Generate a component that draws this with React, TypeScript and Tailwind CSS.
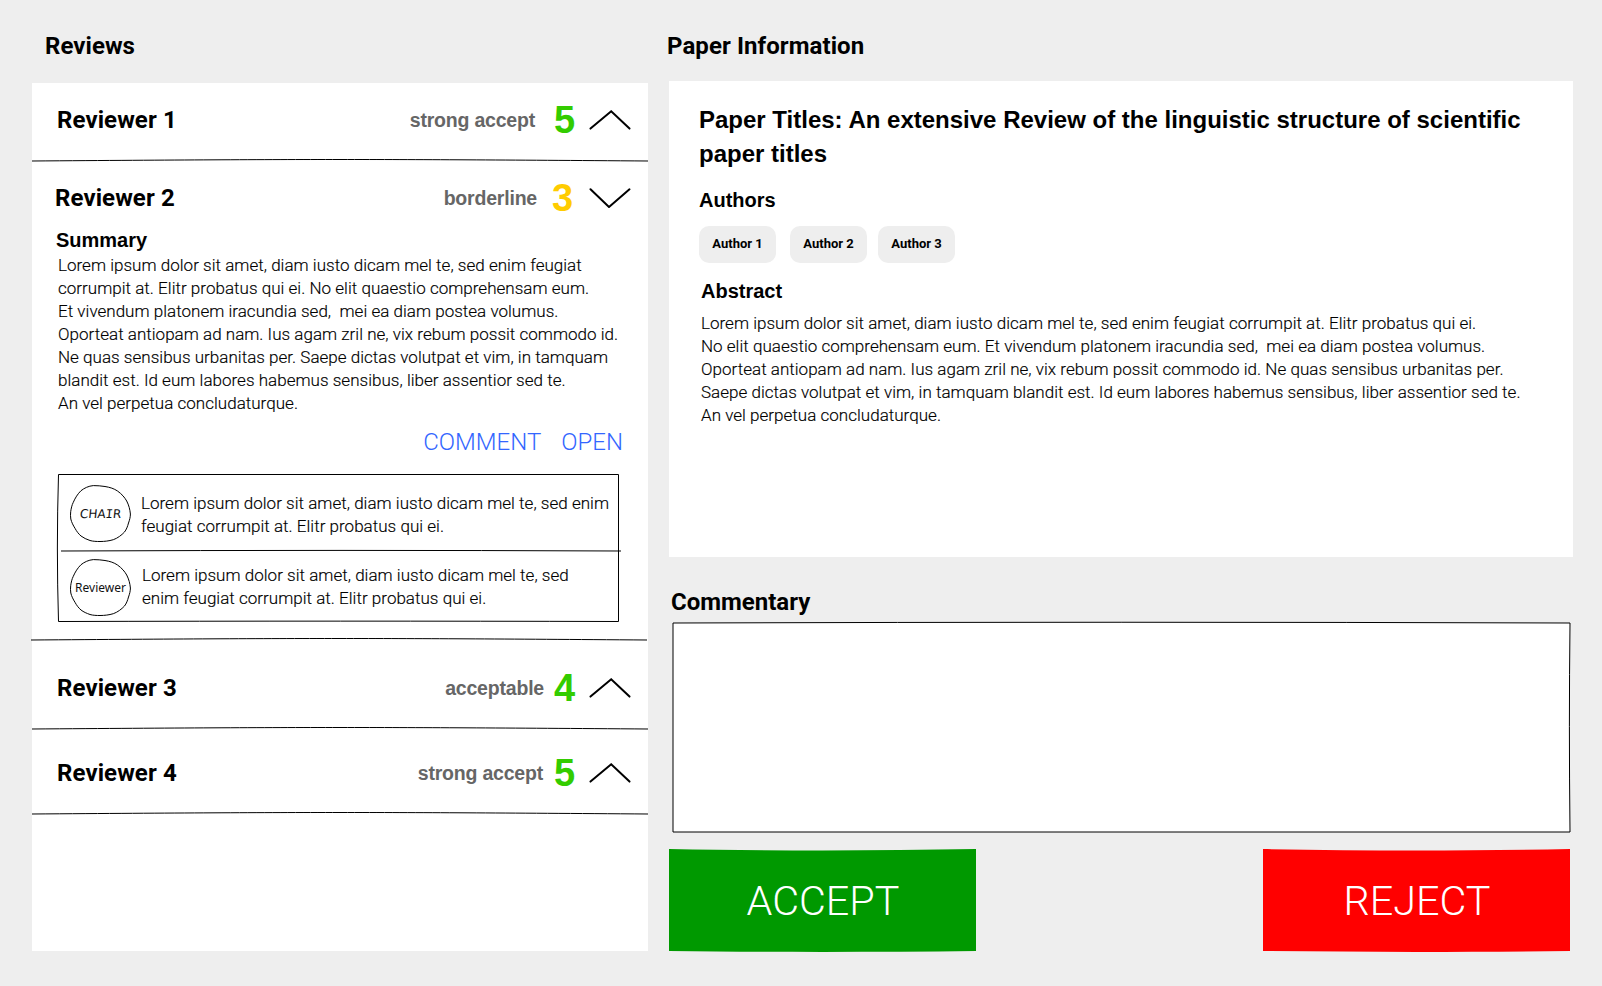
import type { ReactNode } from "react";

function Divider({ className = "" }: { className?: string }) {
  return (
    <svg className={`block h-[3px] w-[616px] shrink-0 ${className}`} viewBox="0 0 616 3" fill="none" stroke="#000">
      <path d="M0 2C150 .9 230 .5 308 .5S466 .9 616 2" />
    </svg>
  );
}

function Chevron({ open }: { open?: boolean }) {
  return (
    <svg className="block h-5 w-[42px] shrink-0" viewBox="0 0 42 20" fill="none" stroke="#000" strokeWidth="2" strokeLinecap="round">
      <path d={open ? "M1.5 1.3L20 19L40.5 1.3" : "M1.5 18.6L22.2 1.3L40.5 18.6"} />
    </svg>
  );
}

type HeaderProps = {
  name: string;
  verdict: string;
  score: number;
  className: string;
  verdictClass: string;
  scoreClass: string;
  open?: boolean;
};

function ReviewerHeader({ name, verdict, score, className, verdictClass, scoreClass, open }: HeaderProps) {
  return (
    <div className={`flex h-7 items-center pr-[17px] leading-7 ${className}`}>
      <h2 className="flex-1 text-2xl leading-7 font-bold tracking-[0.1px]">{name}</h2>
      <span className={`font-['Liberation_Sans',sans-serif] text-[19.5px] leading-7 font-bold tracking-[-0.2px] text-[#666] ${verdictClass}`}>
        {verdict}
      </span>
      <span className={`w-[21px] font-['Liberation_Sans',sans-serif] text-[38px] leading-7 font-bold ${scoreClass}`}>
        {score}
      </span>
      <Chevron open={open} />
    </div>
  );
}

function Avatar({ children }: { children: ReactNode }) {
  return (
    <div className="relative flex h-[57px] w-[61px] shrink-0 items-center justify-center">
      <svg className="absolute inset-0 h-[57px] w-[61px]" viewBox="0 0 61 57" fill="none" stroke="#000">
        <path d="M23.3 .6C27 .6 31.5 .9 35 1.5C40 2.3 44 3.6 47.5 6C52 9.2 54.6 12.4 56.7 16C58.8 20 60 24.6 60.4 29C60.4 32 59.6 35 58.5 38C57.6 41.4 56.4 44.6 54.5 47C51.6 50.2 47.5 53.2 43.3 54.7C39 56 34.5 56.5 30 56.5C26.5 56.5 23 56.4 20 55.5C16.6 54.3 13.6 53 11 51C8.4 48.8 6.6 46.2 5 43.3C3.2 40.4 1.6 37.4 .8 34C.4 31.6 .4 29 .7 26.7C1.2 23.4 1.8 20.2 3.3 17.3C5.2 13 7.6 9 11 5.7C14.4 3 18.6 1 23.3 .6Z" />
      </svg>
      <span className="relative flex items-center leading-4 text-[#111]">{children}</span>
    </div>
  );
}

function SketchButton({ label, fill }: { label: string; fill: string }) {
  return (
    <button className="relative flex h-[103px] w-[307px] items-center justify-center pt-[2px] pl-px text-[41.3px] leading-none font-light text-white">
      <svg className="absolute inset-0 h-[103px] w-[307px]" viewBox="0 0 307 103" fill={fill}>
        <path d="M0 0C100 1.9 207 1.9 307 0V102C207 103.2 100 103.2 0 102Z" />
      </svg>
      <span className="relative">{label}</span>
    </button>
  );
}

const arial = "font-['Liberation_Sans',sans-serif]";
const body = "text-[17px] leading-[23px] font-light tracking-[0.02px] whitespace-pre [-webkit-text-stroke:0.15px_#000]";

export default function App() {
  return (
    <main className="flex h-[986px] w-[1602px] gap-[21px] overflow-hidden bg-[#eee] pt-8 pl-8 font-['Roboto',sans-serif] text-black">
      <section className="w-[616px]">
        <h1 className="pl-[13px] text-2xl leading-7 font-bold tracking-[0.05px]">Reviews</h1>
        <div className="mt-[23px] h-[868px] bg-white pt-[23px]">
          <ReviewerHeader name="Reviewer 1" verdict="strong accept" score={5} className="pl-[25px]" verdictClass="mr-[19px]" scoreClass="mr-[14px] text-[#3c0]" />
          <Divider className="mt-[25px]" />

          <ReviewerHeader name="Reviewer 2" verdict="borderline" score={3} className="mt-[22px] pl-[23px]" verdictClass="mr-[15px]" scoreClass="mr-4 text-[#fc0]" open />
          <h3 className={`mt-4 pl-6 text-xl leading-6 font-bold ${arial}`}>Summary</h3>
          <p className={`mt-[2px] pl-[26px] ${body}`}>
            {`Lorem ipsum dolor sit amet, diam iusto dicam mel te, sed enim feugiat
corrumpit at. Elitr probatus qui ei. No elit quaestio comprehensam eum.
Et vivendum platonem iracundia sed,  mei ea diam postea volumus.
Oporteat antiopam ad nam. Ius agam zril ne, vix rebum possit commodo id.
Ne quas sensibus urbanitas per. Saepe dictas volutpat et vim, in tamquam
blandit est. Id eum labores habemus sensibus, liber assentior sed te.
An vel perpetua concludaturque.`}
          </p>
          <div className="mt-[13px] flex justify-end gap-5 pr-[25px] text-2xl leading-7 font-light text-[#36f]">
            <button>COMMENT</button>
            <button>OPEN</button>
          </div>

          <div className="relative mt-[17px] ml-6 h-[150px] w-[566px]">
            <svg className="absolute inset-0 h-[150px] w-[566px]" viewBox="0 0 566 150" fill="none" stroke="#000">
              <path d="M2.5 1.5H562.5V148.5C380 148 190 148 2.5 148.5C1 100 1 50 2.5 1.5Z" />
              <path d="M5 78C190 77.2 380 77.2 565 78" />
            </svg>
            <div className="relative flex pt-3 pl-[14px]">
              <Avatar>
                <span className="-skew-x-6 text-[12px] font-['DejaVu_Sans',sans-serif]">CHA<span className="font-['DejaVu_Sans_Mono',monospace]">I</span>R</span>
              </Avatar>
              <p className={`mt-[7px] ml-[10px] ${body}`}>
                {"Lorem ipsum dolor sit amet, diam iusto dicam mel te, sed enim\nfeugiat corrumpit at. Elitr probatus qui ei."}
              </p>
            </div>
            <div className="relative flex pt-[17px] pl-[14px]">
              <Avatar>
                <span className="text-[12px] font-['Noto_Sans',sans-serif]">Reviewer</span>
              </Avatar>
              <p className={`mt-[5px] ml-[11px] ${body}`}>
                {"Lorem ipsum dolor sit amet, diam iusto dicam mel te, sed\nenim feugiat corrumpit at. Elitr probatus qui ei."}
              </p>
            </div>
          </div>

          <Divider className="mt-[15px] -ml-px" />
          <ReviewerHeader name="Reviewer 3" verdict="acceptable" score={4} className="mt-[33px] pl-[25px]" verdictClass="mr-[10px]" scoreClass="mr-[14px] text-[#3c0]" />
          <Divider className="mt-[25px]" />
          <ReviewerHeader name="Reviewer 4" verdict="strong accept" score={5} className="mt-[29px] pl-[25px]" verdictClass="mr-[11px]" scoreClass="mr-[14px] text-[#3c0]" />
          <Divider className="mt-[25px]" />
        </div>
      </section>

      <section className="w-[904px]">
        <h1 className="-ml-[2px] text-2xl leading-7 font-bold tracking-[0.08px]">Paper Information</h1>
        <article className="mt-[21px] h-[476px] bg-white pt-[22px] pl-[30px]">
          <h2 className={`text-2xl leading-[34px] font-bold whitespace-pre ${arial}`}>
            {"Paper Titles: An extensive Review of the linguistic structure of scientific\npaper titles"}
          </h2>
          <h3 className={`mt-[17px] text-xl leading-6 font-bold ${arial}`}>Authors</h3>
          <div className="mt-[14px] flex text-[13px] leading-4 font-bold">
            <span className="h-[37px] w-[77px] rounded-[10px] bg-[#eee] pt-[10px] text-center">Author 1</span>
            <span className="ml-[14px] h-[37px] w-[77px] rounded-[10px] bg-[#eee] pt-[10px] text-center">Author 2</span>
            <span className="ml-[11px] h-[37px] w-[77px] rounded-[10px] bg-[#eee] pt-[10px] text-center">Author 3</span>
          </div>
          <h3 className={`mt-4 pl-[2px] text-xl leading-6 font-bold ${arial}`}>Abstract</h3>
          <p className={`mt-[9px] pl-[2px] ${body}`}>
            {`Lorem ipsum dolor sit amet, diam iusto dicam mel te, sed enim feugiat corrumpit at. Elitr probatus qui ei.
No elit quaestio comprehensam eum. Et vivendum platonem iracundia sed,  mei ea diam postea volumus.
Oporteat antiopam ad nam. Ius agam zril ne, vix rebum possit commodo id. Ne quas sensibus urbanitas per.
Saepe dictas volutpat et vim, in tamquam blandit est. Id eum labores habemus sensibus, liber assentior sed te.
An vel perpetua concludaturque.`}
          </p>
        </article>

        <h2 className="mt-[31px] pl-[2px] text-2xl leading-7 font-bold">Commentary</h2>
        <svg className="mt-[5px] ml-[3px] block h-[212px] w-[899px]" viewBox="0 0 899 212" fill="#fff" stroke="#000">
          <path d="M1 2C300 1 600 1 898 2C897.2 70 897.2 140 898 211H1Z" />
        </svg>
        <div className="mt-4 flex w-[901px] justify-between">
          <SketchButton label="ACCEPT" fill="#090" />
          <SketchButton label="REJECT" fill="#f00" />
        </div>
      </section>
    </main>
  );
}
